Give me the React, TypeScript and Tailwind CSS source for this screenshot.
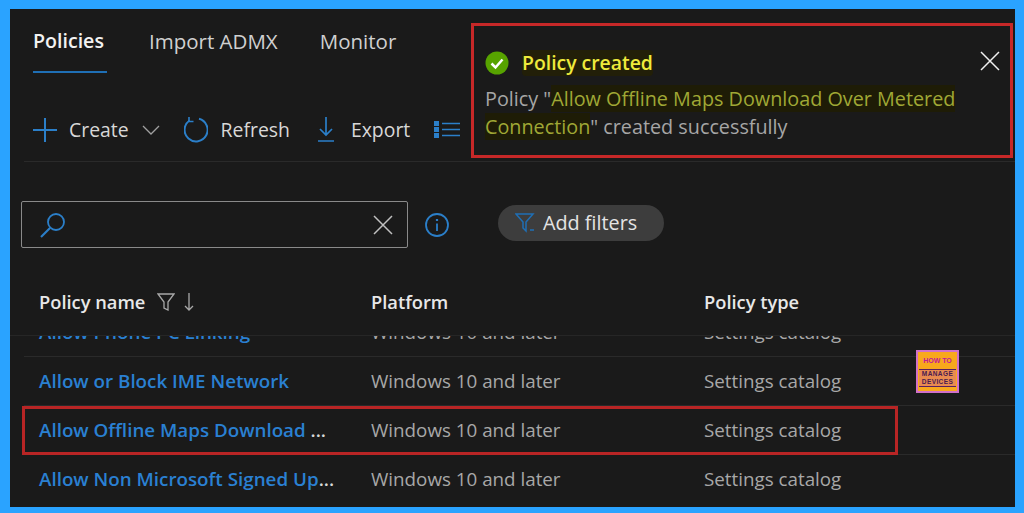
const rows = [
  { name: "Allow Phone PC Linking" },
  { name: "Allow or Block IME Network" },
  { name: "Allow Offline Maps Download ..." },
  { name: "Allow Non Microsoft Signed Up..." },
];

function Tabs() {
  return (
    <div className="flex h-[64px] items-start pl-[23px] pt-[17px] text-[20.500px] text-[#d0d0d0]">
      <div className="flex h-[47px] w-[74px] flex-col border-b-2 border-[#1f6fb5] text-[19.600px] font-semibold text-[#f2f2f2]">
        Policies
      </div>
      <div className="ml-[42px]">Import ADMX</div>
      <div className="ml-[42px]">Monitor</div>
    </div>
  );
}

function Toolbar() {
  return (
    <div className="ml-[14px] flex h-[89px] items-center border-b border-[#2a2a2a] pl-[9px] pt-[25px] text-[19.400px] text-[#d8d8d8]">
      <svg width="24" height="24" viewBox="0 0 24 24" fill="none" stroke="#2b7fc9" strokeWidth="2">
        <path d="M12 0v24M0 12h24" />
      </svg>
      <span className="ml-[12px]">Create</span>
      <svg className="ml-[13px]" width="18" height="10" viewBox="0 0 18 10" fill="none" stroke="#a0a0a0" strokeWidth="1.300">
        <path d="M1 1l8 8 8-8" />
      </svg>
      <svg className="ml-[24px]" width="24" height="26" viewBox="0 0 24 26" fill="none" stroke="#2b7fc9" strokeWidth="2">
        <path d="M15 1.800A11.500 11.500 0 1 1 5.500 3.500" />
        <path d="M5 0v4.500h4.500" strokeWidth="1.600" />
      </svg>
      <span className="ml-[13px]">Refresh</span>
      <svg className="ml-[28px]" width="16" height="25" viewBox="0 0 16 25" fill="none" stroke="#2b7fc9" strokeWidth="1.700">
        <path d="M8 0v18M2 12l6 6 6-6M0 24h16" />
      </svg>
      <span className="ml-[17px]">Export</span>
      <svg className="ml-[24px]" width="26" height="17" viewBox="0 0 26 17" fill="none">
        <path d="M8 2.500h18M8 8.500h18M8 14.500h18" stroke="#2b7fc9" strokeWidth="1.600" />
        <path d="M0 0h5v5H0zM0 6h5v5H0zM0 12h5v5H0z" fill="#2b7fc9" />
      </svg>
    </div>
  );
}

function SearchRow() {
  return (
    <div className="ml-[11px] mt-[39px] flex items-center">
      <div className="flex h-[47px] w-[387px] items-center justify-between rounded-[2px] border border-[#8a8a8a] pl-[18px] pr-[14px]">
        <svg width="26" height="26" viewBox="0 0 26 26" fill="none" stroke="#2b7fc9" strokeWidth="1.800">
          <circle cx="16" cy="10" r="8" />
          <path d="M10 16L1 25" strokeWidth="2.200" />
        </svg>
        <svg width="20" height="20" viewBox="0 0 20 20" fill="none" stroke="#c0c0c0" strokeWidth="1.500">
          <path d="M1 1l18 18M19 1L1 19" />
        </svg>
      </div>
      <svg className="ml-[17px]" width="24" height="24" viewBox="0 0 24 24" fill="none" stroke="#2b7fc9" strokeWidth="1.800">
        <circle cx="12" cy="12" r="11" />
        <path d="M12 10.500V18" />
        <path d="M12 6v2" strokeWidth="2.200" />
      </svg>
      <div className="mb-[3px] ml-[49px] flex h-[36px] w-[166px] items-center rounded-full bg-[#3d3d3d] pl-[17px] text-[19.800px] text-[#e4e4e4]">
        <svg width="20" height="20" viewBox="0 0 20 20" fill="none" stroke="#1f6fb5" strokeWidth="1.500">
          <path d="M1 1h17l-7 8v9l-3-3V9z" />
          <path d="M15 17h4" />
        </svg>
        <span className="ml-[8px]">Add filters</span>
      </div>
    </div>
  );
}

function TableHeader() {
  return (
    <div className="mt-[34px] flex h-[53px] items-center pb-[14px] pl-[29px] text-[18.300px] font-semibold text-[#e8e8e8]">
      <div className="flex w-[332px] items-center">
        <span>Policy name</span>
        <svg className="ml-[12px]" width="18" height="18" viewBox="0 0 18 18" fill="none" stroke="#a8a8a8" strokeWidth="1.300">
          <path d="M1 1h16l-6 8v8l-4-2V9z" />
        </svg>
        <svg className="ml-[9px]" width="10" height="18" viewBox="0 0 10 18" fill="none" stroke="#a8a8a8" strokeWidth="1.300">
          <path d="M5 0v17M1 13l4 4 4-4" />
        </svg>
      </div>
      <div className="w-[333px]">Platform</div>
      <div>Policy type</div>
    </div>
  );
}

function Rows() {
  return (
    <div className="h-[172px] overflow-hidden border-t border-[#262626]">
      <div className="-mt-[28px] ml-[14px]">
        {rows.map((row, i) => (
          <div
            key={row.name}
            className={`flex h-[49px] items-center pl-[15px] text-[18.800px] ${i < rows.length - 1 ? "border-b border-[#2a2a2a]" : ""}`}
          >
            <div className="w-[332px] font-semibold whitespace-nowrap text-[#2a80d2]">
              {row.name.endsWith("...") ? (
                <>
                  {row.name.slice(0, -3)}
                  <span className="text-[#d8d8d8]">...</span>
                </>
              ) : (
                row.name
              )}
            </div>
            <div className="w-[333px] text-[#a8a8a8]">Windows 10 and later</div>
            <div className="text-[#a8a8a8]">Settings catalog</div>
          </div>
        ))}
      </div>
    </div>
  );
}

function Toast() {
  return (
    <div className="absolute left-[471px] top-[23px] flex h-[135px] w-[542px] flex-col border-[3px] border-[#c62828] bg-[#1a1a1a] pl-[11px] pt-[24px]">
      <div className="flex items-center">
        <svg width="24" height="24" viewBox="0 0 24 24">
          <circle cx="12" cy="12" r="11.500" fill="#57a300" />
          <path d="M6.500 12.500l4 4 7-8" fill="none" stroke="#ffffff" strokeWidth="2.500" />
        </svg>
        <span className="ml-[13px] rounded-[4px] bg-[#221f08] text-[19.400px] leading-[26px] font-semibold text-[#eeea3c]">Policy created</span>
      </div>
      <svg className="absolute right-[10px] top-[25px]" width="20" height="20" viewBox="0 0 20 20" fill="none" stroke="#f0f0f0" strokeWidth="1.500">
        <path d="M1 1l18 18M19 1L1 19" />
      </svg>
      <div className="mt-[9px] text-[19.800px] leading-[28px] whitespace-nowrap text-[#a6a6a6]">
        <div>
          Policy "<span className="bg-[#1e1c06] text-[#a0a835]">Allow Offline Maps Download Over Metered</span>
        </div>
        <div>
          <span className="bg-[#1e1c06] text-[#a0a835]">Connection</span>" created successfully
        </div>
      </div>
    </div>
  );
}

function Watermark() {
  return (
    <div className="absolute left-[916px] top-[350px] flex h-[43px] w-[43px] flex-col items-center border-[2px] border-[#d070c8] bg-[#f8a81c] font-['Liberation_Sans',sans-serif] font-bold leading-none">
      <div className="mt-[5px] text-[7px] text-[#c0189c]">HOW TO</div>
      <div className="mx-[1px] mt-[5px] self-stretch border-y border-[#5a2060] bg-[#e88a50] text-center text-[6.500px] leading-[8px] tracking-[0.4px] text-[#4a1a50]">
        MANAGE
        <br />
        DEVICES
      </div>
    </div>
  );
}

export default function App() {
  return (
    <div className="relative h-[513px] w-[1024px] overflow-hidden bg-[#2aa3ff] pb-[6px] pl-[10px] pr-[9px] pt-[9px] font-['Open_Sans',sans-serif]">
      <div className="h-full bg-[#1a1a1a]">
        <Tabs />
        <Toolbar />
        <SearchRow />
        <TableHeader />
        <Rows />
      </div>
      <Toast />
      <Watermark />
      {/* red highlight around the new policy row */}
      <div className="absolute left-[22px] top-[406px] h-[49px] w-[876px] border-[3px] border-[#b82525]" />
    </div>
  );
}
